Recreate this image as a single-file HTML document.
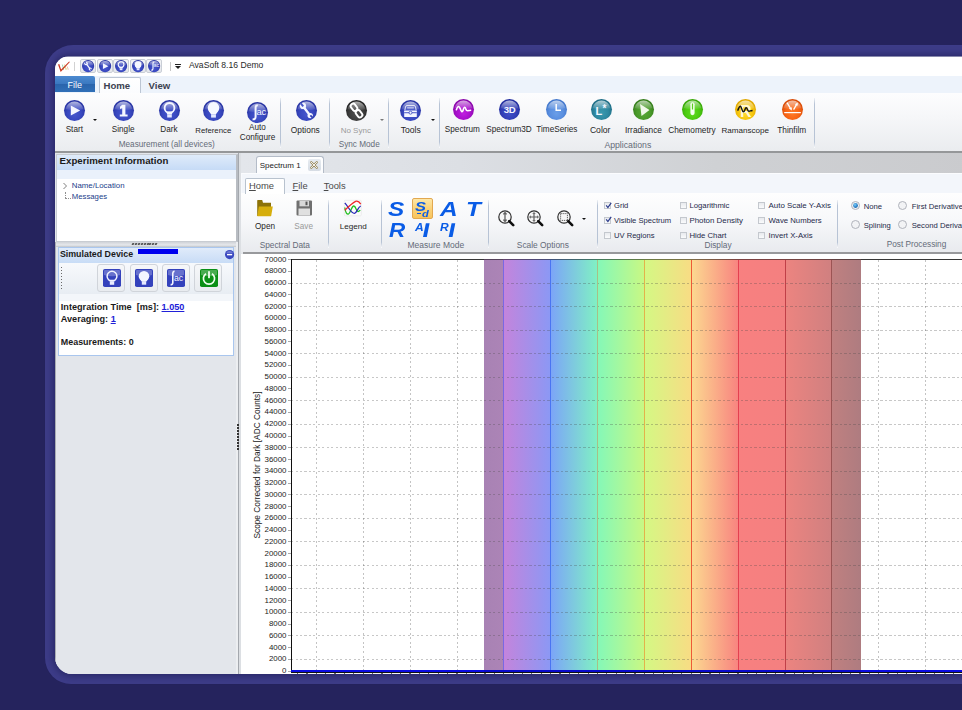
<!DOCTYPE html>
<html><head><meta charset="utf-8"><style>
*{margin:0;padding:0;box-sizing:border-box}
html,body{width:962px;height:710px;overflow:hidden;background:#25235d;font-family:"Liberation Sans",sans-serif}
.frame{position:absolute;left:45px;top:45px;width:960px;height:639px;border-radius:28px 28px 28px 26px;background:#3d3c88}
.shd{position:absolute;left:55px;top:56.6px;width:960px;height:617.4px;border-radius:13px 0 0 17px;box-shadow:0 0 7px 2px rgba(22,21,70,.55)}
.app{position:absolute;left:0;top:0;width:962px;height:710px;clip-path:inset(56.6px -40px 36px 55px round 13px 0 0 17px);background:#e2e5ea}
.a{position:absolute}
.t{position:absolute;white-space:nowrap;line-height:1}
.c{position:absolute;white-space:nowrap;line-height:1;width:100px;text-align:center}
svg{position:absolute;overflow:visible}
</style></head><body>
<div class="frame"></div><div class="shd"></div>
<div class="app">
<div class="a" style="left:55px;top:57px;width:920px;height:19px;background:#fff"></div>
<div class="a" style="left:55px;top:76px;width:920px;height:17px;background:#edf3fb"></div>
<div class="a" style="left:55px;top:93px;width:920px;height:58px;background:linear-gradient(#fdfdfe,#f6f7f9 40%,#eaecef)"></div>
<div class="a" style="left:55px;top:151px;width:920px;height:2px;background:#959799"></div>
<svg style="left:56px;top:59px" width="16" height="15" viewBox="0 0 16 15">
<path d="M6.4 5.6 L7.6 11 M7 8.6 L8.4 8.4" stroke="#9ad0a8" stroke-width="0.9" fill="none"/>
<path d="M8.6 5.4 L9.6 10.6 M9.2 8 L11 10.8" stroke="#e6d890" stroke-width="0.9" fill="none"/>
<path d="M11 7.4 L12.4 10.6" stroke="#f0b8a0" stroke-width="0.9" fill="none"/>
<path d="M2 5.4 L3.3 5.1 L5.1 10.6 L13.1 2.4 L13.9 3.1 L4.7 12.9 Z" fill="#cc3a22"/>
</svg>
<div class="a" style="left:73.5px;top:62px;width:1.5px;height:8.5px;background:#d2d2d2"></div>
<div class="a" style="left:170px;top:62px;width:1px;height:9px;background:#c6c6c6"></div>
<div class="a" style="left:175px;top:64px;width:6px;height:1px;background:#222"></div>
<div class="a" style="left:175px;top:66px;width:0px;height:0px;border-left:3px solid transparent;border-right:3px solid transparent;border-top:3px solid #222"></div>
<div class="t" style="left:189px;top:60.72px;font-size:8.6px;color:#2a2a2a;">AvaSoft 8.16 Demo</div>
<div class="a" style="left:55px;top:76px;width:40px;height:16px;border-radius:0 2px 0 0;background:linear-gradient(#4c8ad0,#3a78c0 50%,#2a64ac 51%,#3070b8)"></div>
<div class="t" style="left:67.5px;top:81.48px;font-size:9px;color:#fff;">File</div>
<div class="a" style="left:99px;top:77px;width:42px;height:16px;border:1px solid #bcc6d4;border-bottom:none;border-radius:2px 2px 0 0;background:linear-gradient(#fff,#fbfcfe)"></div>
<div class="t" style="left:103.5px;top:80.77px;font-size:9.6px;color:#3c4250;font-weight:bold">Home</div>
<div class="t" style="left:148.5px;top:80.77px;font-size:9.6px;color:#3c4250;font-weight:bold">View</div>
<svg width="0" height="0" style="position:absolute"><defs><radialGradient id="gBlue" cx="50%" cy="60%" r="55%" fx="50%" fy="70%"><stop offset="0" stop-color="#4656cc"/><stop offset="0.6" stop-color="#3848c0"/><stop offset="1" stop-color="#2a36a4"/></radialGradient><radialGradient id="gGray" cx="50%" cy="60%" r="55%" fx="50%" fy="70%"><stop offset="0" stop-color="#505050"/><stop offset="0.6" stop-color="#3e3e3e"/><stop offset="1" stop-color="#262626"/></radialGradient><radialGradient id="gPurp" cx="50%" cy="60%" r="55%" fx="50%" fy="70%"><stop offset="0" stop-color="#c020e0"/><stop offset="0.6" stop-color="#a810cc"/><stop offset="1" stop-color="#8a08aa"/></radialGradient><radialGradient id="gLBlue" cx="50%" cy="60%" r="55%" fx="50%" fy="70%"><stop offset="0" stop-color="#6a9ee8"/><stop offset="0.6" stop-color="#5a8fe0"/><stop offset="1" stop-color="#4378cc"/></radialGradient><radialGradient id="gTeal" cx="50%" cy="60%" r="55%" fx="50%" fy="70%"><stop offset="0" stop-color="#3a9ab0"/><stop offset="0.6" stop-color="#2e88a0"/><stop offset="1" stop-color="#1f6e86"/></radialGradient><radialGradient id="gGreen" cx="50%" cy="60%" r="55%" fx="50%" fy="70%"><stop offset="0" stop-color="#58a838"/><stop offset="0.6" stop-color="#4a9a2a"/><stop offset="1" stop-color="#367e1c"/></radialGradient><radialGradient id="gLime" cx="50%" cy="60%" r="55%" fx="50%" fy="70%"><stop offset="0" stop-color="#60dc20"/><stop offset="0.6" stop-color="#4ccc10"/><stop offset="1" stop-color="#38a808"/></radialGradient><radialGradient id="gYel" cx="50%" cy="60%" r="55%" fx="50%" fy="70%"><stop offset="0" stop-color="#ffd830"/><stop offset="0.6" stop-color="#f8c810"/><stop offset="1" stop-color="#e0a800"/></radialGradient><radialGradient id="gOra" cx="50%" cy="60%" r="55%" fx="50%" fy="70%"><stop offset="0" stop-color="#ff7a28"/><stop offset="0.6" stop-color="#f86414"/><stop offset="1" stop-color="#d84c08"/></radialGradient><radialGradient id="gDBlue" cx="50%" cy="60%" r="55%" fx="50%" fy="70%"><stop offset="0" stop-color="#4050c8"/><stop offset="0.6" stop-color="#3340b8"/><stop offset="1" stop-color="#2530a0"/></radialGradient><linearGradient id="hl" x1="0" y1="0" x2="0" y2="1"><stop offset="0" stop-color="#fff" stop-opacity=".65"/><stop offset="1" stop-color="#fff" stop-opacity=".05"/></linearGradient><linearGradient id="hl2" x1="0" y1="0" x2="0" y2="1"><stop offset="0" stop-color="#fff" stop-opacity=".45"/><stop offset="1" stop-color="#fff" stop-opacity="0"/></linearGradient></defs></svg>
<svg style="left:63.80px;top:99.90px" width="21" height="21" viewBox="0 0 21 21"><circle cx="10.5" cy="10.5" r="10.5" fill="url(#gBlue)"/><path d="M1.6 9.2 A9 9 0 0 1 19.4 9.2 Q10.5 11.5 1.6 9.2Z" fill="url(#hl)"/><polygon points="6.8,5.6 16.2,10.6 6.8,15.4" fill="#f4f6ff"/></svg>
<svg style="left:113.20px;top:100.00px" width="21" height="21" viewBox="0 0 21 21"><circle cx="10.5" cy="10.5" r="10.5" fill="url(#gBlue)"/><path d="M1.6 9.2 A9 9 0 0 1 19.4 9.2 Q10.5 11.5 1.6 9.2Z" fill="url(#hl)"/><path d="M9.2 4.8 L12.4 4.8 L12.4 14.4 L14.6 14.4 L14.6 16.6 L6.8 16.6 L6.8 14.4 L9.2 14.4 L9.2 8.2 L7 9 L7 6.8 Z" fill="#f4f6ff"/></svg>
<svg style="left:159.30px;top:100.00px" width="21" height="21" viewBox="0 0 21 21"><circle cx="10.5" cy="10.5" r="10.5" fill="url(#gBlue)"/><path d="M1.6 9.2 A9 9 0 0 1 19.4 9.2 Q10.5 11.5 1.6 9.2Z" fill="url(#hl)"/><circle cx="10.5" cy="7.9" r="4.9" fill="none" stroke="#f4f6ff" stroke-width="1.9"/><path d="M7.2 11.6 L13.8 11.6 L12.8 14.5 L8.2 14.5Z" fill="#f4f6ff"/><rect x="8.2" y="14.4" width="4.6" height="3.1" fill="#e6eaff"/></svg>
<svg style="left:203.20px;top:99.90px" width="21" height="21" viewBox="0 0 21 21"><circle cx="10.5" cy="10.5" r="10.5" fill="url(#gBlue)"/><path d="M1.6 9.2 A9 9 0 0 1 19.4 9.2 Q10.5 11.5 1.6 9.2Z" fill="url(#hl)"/><circle cx="10.5" cy="7.8" r="5.8" fill="#f6f8ff"/><path d="M5.6 10.2 L15.4 10.2 L12.9 14.5 L8.1 14.5Z" fill="#f6f8ff"/><rect x="8.1" y="14.4" width="4.8" height="3.2" fill="#e6eaff"/></svg>
<svg style="left:247.30px;top:101.90px" width="21" height="21" viewBox="0 0 21 21"><circle cx="10.5" cy="10.5" r="10.5" fill="url(#gBlue)"/><path d="M1.6 9.2 A9 9 0 0 1 19.4 9.2 Q10.5 11.5 1.6 9.2Z" fill="url(#hl)"/><path d="M10.8 3.6 C9.2 3.2 8.6 4.2 8.6 6 L8.6 14.4 C8.6 16.6 7.8 17.6 5.6 17.3" fill="none" stroke="#f4f6ff" stroke-width="2"/><text x="9.6" y="12.8" font-family="Liberation Sans" font-size="9.4" letter-spacing="-0.3" fill="#f4f6ff">ac</text></svg>
<svg style="left:296.00px;top:100.00px" width="21" height="21" viewBox="0 0 21 21"><circle cx="10.5" cy="10.5" r="10.5" fill="url(#gBlue)"/><path d="M1.6 9.2 A9 9 0 0 1 19.4 9.2 Q10.5 11.5 1.6 9.2Z" fill="url(#hl)"/><path d="M7.8 7.2 L13.6 14.8" stroke="#f4f6ff" stroke-width="2.3" stroke-linecap="round"/><circle cx="7" cy="5.9" r="3.1" fill="#f4f6ff"/><circle cx="14.2" cy="15.6" r="2.7" fill="#f4f6ff"/><path d="M4.6 3.2 L7.2 6.4" stroke="#4858c8" stroke-width="2"/><path d="M16.8 17.8 L14.4 15.4" stroke="#3040b4" stroke-width="1.8"/></svg>
<svg style="left:346.10px;top:100.00px" width="21" height="21" viewBox="0 0 21 21"><circle cx="10.5" cy="10.5" r="10.5" fill="url(#gGray)"/><path d="M1.6 9.2 A9 9 0 0 1 19.4 9.2 Q10.5 11.5 1.6 9.2Z" fill="url(#hl)"/><g transform="rotate(-38 10.5 10.5)"><rect x="8.1" y="2.6" width="4.8" height="7.6" rx="2.1" fill="none" stroke="#fff" stroke-width="1.9"/><rect x="8.1" y="10.8" width="4.8" height="7.6" rx="2.1" fill="none" stroke="#fff" stroke-width="1.9"/></g></svg>
<svg style="left:400.10px;top:100.00px" width="21" height="21" viewBox="0 0 21 21"><circle cx="10.5" cy="10.5" r="10.5" fill="url(#gBlue)"/><path d="M1.6 9.2 A9 9 0 0 1 19.4 9.2 Q10.5 11.5 1.6 9.2Z" fill="url(#hl)"/><path d="M4.8 10.4 L5.5 6.8 Q5.8 5.6 7 5.6 L14 5.6 Q15.2 5.6 15.5 6.8 L16.2 10.4" fill="none" stroke="#fff" stroke-opacity=".85" stroke-width="1"/><rect x="7.2" y="7.4" width="6.6" height="1" fill="#fff" opacity=".8"/><rect x="4.2" y="10.6" width="12.6" height="6.4" rx="0.6" fill="#f4f6ff"/><rect x="4.2" y="12.3" width="12.6" height="0.9" fill="#3848c0"/><circle cx="10.5" cy="12.7" r="1.5" fill="#f4f6ff" stroke="#3848c0" stroke-width="0.8"/></svg>
<svg style="left:452.50px;top:99.00px" width="21" height="21" viewBox="0 0 21 21"><circle cx="10.5" cy="10.5" r="10.5" fill="url(#gPurp)"/><path d="M1.6 9.2 A9 9 0 0 1 19.4 9.2 Q10.5 11.5 1.6 9.2Z" fill="url(#hl)"/><path d="M3.4 10.8 C4.6 6.8 6 6.4 7.2 9.6 C8.2 12.6 9.2 14.6 10.4 10.2 C11.2 7.4 12.2 7.6 13 10.6 C13.6 12.6 14.8 11.6 17.6 11.2" fill="none" stroke="#fff" stroke-width="1.6" stroke-linecap="round"/></svg>
<svg style="left:498.90px;top:99.00px" width="21" height="21" viewBox="0 0 21 21"><circle cx="10.5" cy="10.5" r="10.5" fill="url(#gDBlue)"/><path d="M1.6 9.2 A9 9 0 0 1 19.4 9.2 Q10.5 11.5 1.6 9.2Z" fill="url(#hl)"/><text x="10.6" y="14.4" font-family="Liberation Sans" font-weight="bold" font-size="9.6" letter-spacing="-0.3" fill="#f4f6ff" text-anchor="middle">3D</text></svg>
<svg style="left:546.40px;top:99.00px" width="21" height="21" viewBox="0 0 21 21"><circle cx="10.5" cy="10.5" r="10.5" fill="url(#gLBlue)"/><path d="M1.6 9.2 A9 9 0 0 1 19.4 9.2 Q10.5 11.5 1.6 9.2Z" fill="url(#hl)"/><path d="M10.2 5 L10.2 11.2 L15 11.2" fill="none" stroke="#fff" stroke-width="1.5"/></svg>
<svg style="left:590.75px;top:99.00px" width="21" height="21" viewBox="0 0 21 21"><circle cx="10.5" cy="10.5" r="10.5" fill="url(#gTeal)"/><path d="M1.6 9.2 A9 9 0 0 1 19.4 9.2 Q10.5 11.5 1.6 9.2Z" fill="url(#hl)"/><text x="4.6" y="15.6" font-family="Liberation Sans" font-weight="bold" font-size="11" fill="#f4f6ff">L</text><text x="11.4" y="13" font-family="Liberation Sans" font-weight="bold" font-size="10" fill="#f4f6ff">*</text></svg>
<svg style="left:633.25px;top:99.00px" width="21" height="21" viewBox="0 0 21 21"><circle cx="10.5" cy="10.5" r="10.5" fill="url(#gGreen)"/><path d="M1.6 9.2 A9 9 0 0 1 19.4 9.2 Q10.5 11.5 1.6 9.2Z" fill="url(#hl)"/><polygon points="7,5 16.5,11 8.5,17" fill="#f0f8ea"/></svg>
<svg style="left:681.50px;top:99.00px" width="21" height="21" viewBox="0 0 21 21"><circle cx="10.5" cy="10.5" r="10.5" fill="url(#gLime)"/><path d="M1.6 9.2 A9 9 0 0 1 19.4 9.2 Q10.5 11.5 1.6 9.2Z" fill="url(#hl)"/><rect x="8.4" y="3.2" width="4.2" height="13" rx="2.1" fill="#f4fff0"/><rect x="9.9" y="4.5" width="1.2" height="6" fill="#5ccc20"/></svg>
<svg style="left:734.50px;top:99.00px" width="21" height="21" viewBox="0 0 21 21"><circle cx="10.5" cy="10.5" r="10.5" fill="url(#gYel)"/><path d="M1.6 9.2 A9 9 0 0 1 19.4 9.2 Q10.5 11.5 1.6 9.2Z" fill="url(#hl)"/><text x="10.8" y="17.6" font-family="Liberation Sans" font-weight="bold" font-size="16" fill="#fff8d8" text-anchor="middle">R</text><path d="M2.6 11.6 C3.6 10 4.2 6.8 5.4 7.2 C6.6 7.6 7 12.8 8.4 12.8 C9.8 12.8 10 8.6 11.2 8.8 C12.4 9 12.6 12.4 14 12.2 C15.2 12 15.8 11.6 17.6 11.4" fill="none" stroke="#151515" stroke-width="1.5"/></svg>
<svg style="left:782.00px;top:99.00px" width="21" height="21" viewBox="0 0 21 21"><circle cx="10.5" cy="10.5" r="10.5" fill="url(#gOra)"/><path d="M1.6 9.2 A9 9 0 0 1 19.4 9.2 Q10.5 11.5 1.6 9.2Z" fill="url(#hl)"/><rect x="2.2" y="13" width="16.6" height="1.2" fill="#fff"/><path d="M5 3.6 L8.8 9.8" stroke="#fff" stroke-width="1.3"/><polygon points="9.8,11.4 6.8,9.4 9.8,8.2" fill="#fff"/><path d="M11.6 10.6 L14.8 5.2" stroke="#fff" stroke-width="1.3"/><polygon points="15.8,3.4 12.8,5.2 15.6,6.8" fill="#fff"/></svg>
<div class="c" style="left:24.30px;top:126.46px;font-size:8.2px;color:#262626;">Start</div>
<div class="c" style="left:73.15px;top:126.46px;font-size:8.2px;color:#262626;">Single</div>
<div class="c" style="left:119.00px;top:126.46px;font-size:8.2px;color:#262626;">Dark</div>
<div class="c" style="left:163.30px;top:126.80px;font-size:7.8px;color:#262626;">Reference</div>
<div class="c" style="left:207.50px;top:124.26px;font-size:8.2px;color:#262626;">Auto</div>
<div class="c" style="left:207.50px;top:133.86px;font-size:8.2px;color:#262626;">Configure</div>
<div class="c" style="left:255.30px;top:126.29px;font-size:8.4px;color:#262626;">Options</div>
<div class="c" style="left:305.80px;top:126.63px;font-size:8px;color:#9a9a9a;">No Sync</div>
<div class="c" style="left:360.80px;top:126.12px;font-size:8.6px;color:#262626;">Tools</div>
<div class="c" style="left:412.40px;top:126.46px;font-size:8.2px;color:#262626;">Spectrum</div>
<div class="c" style="left:459.00px;top:126.46px;font-size:8.2px;color:#262626;">Spectrum3D</div>
<div class="c" style="left:506.90px;top:126.46px;font-size:8.2px;color:#262626;">TimeSeries</div>
<div class="c" style="left:550.20px;top:126.12px;font-size:8.6px;color:#262626;">Color</div>
<div class="c" style="left:593.50px;top:126.37px;font-size:8.3px;color:#262626;">Irradiance</div>
<div class="c" style="left:641.90px;top:126.37px;font-size:8.3px;color:#262626;">Chemometry</div>
<div class="c" style="left:695.25px;top:126.54px;font-size:8.1px;color:#262626;">Ramanscope</div>
<div class="c" style="left:741.75px;top:126.37px;font-size:8.3px;color:#262626;">Thinfilm</div>
<div class="t" style="left:118.75px;top:141.36px;font-size:8.2px;color:#646b78;">Measurement (all devices)</div>
<div class="t" style="left:338.75px;top:141.36px;font-size:8.2px;color:#646b78;">Sync Mode</div>
<div class="t" style="left:604.4px;top:140.94px;font-size:8.7px;color:#646b78;">Applications</div>
<div class="a" style="left:280px;top:98px;width:1px;height:50px;background:linear-gradient(rgba(185,197,215,0.2),#b7c3d5 12%,#b7c3d5 88%,rgba(255,255,255,.9))"></div>
<div class="a" style="left:329px;top:98px;width:1px;height:50px;background:linear-gradient(rgba(185,197,215,0.2),#b7c3d5 12%,#b7c3d5 88%,rgba(255,255,255,.9))"></div>
<div class="a" style="left:388px;top:98px;width:1px;height:50px;background:linear-gradient(rgba(185,197,215,0.2),#b7c3d5 12%,#b7c3d5 88%,rgba(255,255,255,.9))"></div>
<div class="a" style="left:439px;top:98px;width:1px;height:50px;background:linear-gradient(rgba(185,197,215,0.2),#b7c3d5 12%,#b7c3d5 88%,rgba(255,255,255,.9))"></div>
<div class="a" style="left:814px;top:98px;width:1px;height:50px;background:linear-gradient(rgba(185,197,215,0.2),#b7c3d5 12%,#b7c3d5 88%,rgba(255,255,255,.9))"></div>
<div class="a" style="left:93.3px;top:119.0px;width:0px;height:0px;border-left:2.5px solid transparent;border-right:2.5px solid transparent;border-top:2.5px solid #111"></div>
<div class="a" style="left:379.5px;top:119.0px;width:0px;height:0px;border-left:2.5px solid transparent;border-right:2.5px solid transparent;border-top:2.5px solid #777"></div>
<div class="a" style="left:431.3px;top:119.0px;width:0px;height:0px;border-left:2.5px solid transparent;border-right:2.5px solid transparent;border-top:2.5px solid #111"></div>
<div class="a" style="left:80.0px;top:59px;width:16px;height:14px;border:1px solid #c9ced6;border-radius:2px;background:linear-gradient(#f4f5f7,#e4e7ec)"></div>
<div class="a" style="left:96.5px;top:59px;width:16px;height:14px;border:1px solid #c9ced6;border-radius:2px;background:linear-gradient(#f4f5f7,#e4e7ec)"></div>
<div class="a" style="left:113.0px;top:59px;width:16px;height:14px;border:1px solid #c9ced6;border-radius:2px;background:linear-gradient(#f4f5f7,#e4e7ec)"></div>
<div class="a" style="left:129.5px;top:59px;width:16px;height:14px;border:1px solid #c9ced6;border-radius:2px;background:linear-gradient(#f4f5f7,#e4e7ec)"></div>
<div class="a" style="left:146.0px;top:59px;width:16px;height:14px;border:1px solid #c9ced6;border-radius:2px;background:linear-gradient(#f4f5f7,#e4e7ec)"></div>
<svg style="left:82.40px;top:59.70px" width="12.2" height="12.2" viewBox="0 0 21 21"><circle cx="10.5" cy="10.5" r="10.5" fill="url(#gBlue)"/><path d="M1.6 9.2 A9 9 0 0 1 19.4 9.2 Q10.5 11.5 1.6 9.2Z" fill="url(#hl)"/><path d="M7.8 7.2 L13.6 14.8" stroke="#f4f6ff" stroke-width="2.3" stroke-linecap="round"/><circle cx="7" cy="5.9" r="3.1" fill="#f4f6ff"/><circle cx="14.2" cy="15.6" r="2.7" fill="#f4f6ff"/><path d="M4.6 3.2 L7.2 6.4" stroke="#4858c8" stroke-width="2"/><path d="M16.8 17.8 L14.4 15.4" stroke="#3040b4" stroke-width="1.8"/></svg>
<svg style="left:98.80px;top:59.70px" width="12.2" height="12.2" viewBox="0 0 21 21"><circle cx="10.5" cy="10.5" r="10.5" fill="url(#gBlue)"/><path d="M1.6 9.2 A9 9 0 0 1 19.4 9.2 Q10.5 11.5 1.6 9.2Z" fill="url(#hl)"/><polygon points="6.8,5.6 16.2,10.6 6.8,15.4" fill="#f4f6ff"/></svg>
<svg style="left:115.20px;top:59.70px" width="12.2" height="12.2" viewBox="0 0 21 21"><circle cx="10.5" cy="10.5" r="10.5" fill="url(#gBlue)"/><path d="M1.6 9.2 A9 9 0 0 1 19.4 9.2 Q10.5 11.5 1.6 9.2Z" fill="url(#hl)"/><circle cx="10.5" cy="7.9" r="4.9" fill="none" stroke="#f4f6ff" stroke-width="1.9"/><path d="M7.2 11.6 L13.8 11.6 L12.8 14.5 L8.2 14.5Z" fill="#f4f6ff"/><rect x="8.2" y="14.4" width="4.6" height="3.1" fill="#e6eaff"/></svg>
<svg style="left:131.60px;top:59.70px" width="12.2" height="12.2" viewBox="0 0 21 21"><circle cx="10.5" cy="10.5" r="10.5" fill="url(#gBlue)"/><path d="M1.6 9.2 A9 9 0 0 1 19.4 9.2 Q10.5 11.5 1.6 9.2Z" fill="url(#hl)"/><circle cx="10.5" cy="7.8" r="5.8" fill="#f6f8ff"/><path d="M5.6 10.2 L15.4 10.2 L12.9 14.5 L8.1 14.5Z" fill="#f6f8ff"/><rect x="8.1" y="14.4" width="4.8" height="3.2" fill="#e6eaff"/></svg>
<svg style="left:148.00px;top:59.70px" width="12.2" height="12.2" viewBox="0 0 21 21"><circle cx="10.5" cy="10.5" r="10.5" fill="url(#gBlue)"/><path d="M1.6 9.2 A9 9 0 0 1 19.4 9.2 Q10.5 11.5 1.6 9.2Z" fill="url(#hl)"/><path d="M10.8 3.6 C9.2 3.2 8.6 4.2 8.6 6 L8.6 14.4 C8.6 16.6 7.8 17.6 5.6 17.3" fill="none" stroke="#f4f6ff" stroke-width="2"/><text x="9.6" y="12.8" font-family="Liberation Sans" font-size="9.4" letter-spacing="-0.3" fill="#f4f6ff">ac</text></svg>
<div class="a" style="left:55px;top:153px;width:184px;height:521px;background:#e3e6eb"></div>
<div class="a" style="left:55.5px;top:153.5px;width:182.5px;height:88.5px;background:#fff;border:1px solid #c8ccd2;border-right:2px solid #b8bcc2"></div>
<div class="a" style="left:56.5px;top:154.5px;width:179.5px;height:15.8px;background:linear-gradient(#dfebfa,#c6dbf6)"></div>
<div class="a" style="left:56.5px;top:170.3px;width:179.5px;height:8.7px;background:#eaf1fb"></div>
<div class="t" style="left:59.6px;top:155.89px;font-size:9.7px;color:#1a1a1a;font-weight:bold">Experiment Information</div>
<svg style="left:62px;top:181.5px" width="6" height="8" viewBox="0 0 6 8"><path d="M1.5 1 L4.5 4 L1.5 7" fill="none" stroke="#808080" stroke-width="1"/></svg>
<div class="a" style="left:65px;top:192px;width:0px;height:6px;border-left:1px dotted #909090"></div>
<div class="a" style="left:65px;top:198px;width:6px;height:0px;border-top:1px dotted #909090"></div>
<div class="t" style="left:71.8px;top:181.75px;font-size:7.85px;color:#22408a;">Name/Location</div>
<div class="t" style="left:71.8px;top:193.34px;font-size:7.75px;color:#22408a;">Messages</div>
<div class="a" style="left:55px;top:242px;width:183px;height:5px;background:linear-gradient(#d0d3d8,#e6e8ec 60%,#bfc3c9)"></div>
<div class="a" style="left:132.0px;top:243px;width:1.6px;height:2px;background:#555;transform:skewX(-25deg)"></div>
<div class="a" style="left:134.9px;top:243px;width:1.6px;height:2px;background:#555;transform:skewX(-25deg)"></div>
<div class="a" style="left:137.8px;top:243px;width:1.6px;height:2px;background:#555;transform:skewX(-25deg)"></div>
<div class="a" style="left:140.7px;top:243px;width:1.6px;height:2px;background:#555;transform:skewX(-25deg)"></div>
<div class="a" style="left:143.6px;top:243px;width:1.6px;height:2px;background:#555;transform:skewX(-25deg)"></div>
<div class="a" style="left:146.5px;top:243px;width:1.6px;height:2px;background:#555;transform:skewX(-25deg)"></div>
<div class="a" style="left:149.4px;top:243px;width:1.6px;height:2px;background:#555;transform:skewX(-25deg)"></div>
<div class="a" style="left:152.3px;top:243px;width:1.6px;height:2px;background:#555;transform:skewX(-25deg)"></div>
<div class="a" style="left:155.2px;top:243px;width:1.6px;height:2px;background:#555;transform:skewX(-25deg)"></div>
<div class="a" style="left:57.5px;top:246.5px;width:176.5px;height:109px;background:#fff;border:1px solid #a9c6ee"></div>
<div class="a" style="left:58.5px;top:247.5px;width:174.5px;height:15px;background:linear-gradient(#e0ebfa,#c8dcf6)"></div>
<div class="t" style="left:59.9px;top:250.31px;font-size:8.85px;color:#1a1a1a;font-weight:bold">Simulated Device</div>
<div class="a" style="left:137.7px;top:249.2px;width:40.4px;height:4.5px;background:#0000ee"></div>
<svg style="left:225px;top:249.8px" width="9.2" height="9.2" viewBox="0 0 10 10"><circle cx="5" cy="5" r="5" fill="#3a48c0"/><path d="M1.2 3.6 A4 4 0 0 1 8.8 3.6Z" fill="#fff" opacity=".25"/><rect x="2.2" y="4.3" width="5.6" height="1.5" fill="#fff"/></svg>
<div class="a" style="left:58.5px;top:262.5px;width:174.5px;height:31px;background:linear-gradient(#f7f9fc,#e8edf3)"></div>
<div class="a" style="left:61px;top:266.5px;width:1.2px;height:1.5px;background:#6a6a6a"></div>
<div class="a" style="left:61px;top:269.5px;width:1.2px;height:1.5px;background:#6a6a6a"></div>
<div class="a" style="left:61px;top:272.5px;width:1.2px;height:1.5px;background:#6a6a6a"></div>
<div class="a" style="left:61px;top:275.5px;width:1.2px;height:1.5px;background:#6a6a6a"></div>
<div class="a" style="left:61px;top:278.5px;width:1.2px;height:1.5px;background:#6a6a6a"></div>
<div class="a" style="left:61px;top:281.5px;width:1.2px;height:1.5px;background:#6a6a6a"></div>
<div class="a" style="left:61px;top:284.5px;width:1.2px;height:1.5px;background:#6a6a6a"></div>
<div class="a" style="left:61px;top:287.5px;width:1.2px;height:1.5px;background:#6a6a6a"></div>
<div class="a" style="left:97.3px;top:264px;width:28px;height:28.2px;border:1px solid #d0d4da;border-radius:3px;background:linear-gradient(#f6f7f9,#e9ecf0)"></div>
<div class="a" style="left:129.5px;top:264px;width:28px;height:28.2px;border:1px solid #d0d4da;border-radius:3px;background:linear-gradient(#f6f7f9,#e9ecf0)"></div>
<div class="a" style="left:161.7px;top:264px;width:28px;height:28.2px;border:1px solid #d0d4da;border-radius:3px;background:linear-gradient(#f6f7f9,#e9ecf0)"></div>
<div class="a" style="left:193.9px;top:264px;width:28px;height:28.2px;border:1px solid #d0d4da;border-radius:3px;background:linear-gradient(#f6f7f9,#e9ecf0)"></div>
<svg style="left:103px;top:269px" width="18" height="18" viewBox="0 0 18 18"><rect x="0" y="0" width="18" height="18" rx="1.8" fill="#3442bc"/><path d="M1 6 Q9 8.5 17 6 L17 2 Q17 1 16 1 L2 1 Q1 1 1 2Z" fill="#fff" opacity=".25"/><circle cx="9" cy="7.2" r="4.9" fill="none" stroke="#f0f2ff" stroke-width="1.5"/><path d="M6.3 10.8 L11.7 10.8 L11 12.6 L7 12.6Z" fill="#f0f2ff"/><rect x="6.8" y="12.6" width="4.4" height="3.2" fill="#e8ecff"/></svg>
<svg style="left:135.2px;top:269px" width="18" height="18" viewBox="0 0 18 18"><rect x="0" y="0" width="18" height="18" rx="1.8" fill="#3442bc"/><path d="M1 6 Q9 8.5 17 6 L17 2 Q17 1 16 1 L2 1 Q1 1 1 2Z" fill="#fff" opacity=".25"/><circle cx="9" cy="7.2" r="5.3" fill="#f4f6ff"/><path d="M5.6 10.2 L12.4 10.2 L11.2 12.8 L6.8 12.8Z" fill="#f4f6ff"/><rect x="6.8" y="12.7" width="4.4" height="3" fill="#e6eaff"/></svg>
<svg style="left:167.4px;top:269px" width="18" height="18" viewBox="0 0 18 18"><rect x="0" y="0" width="18" height="18" rx="1.8" fill="#3442bc"/><path d="M1 6 Q9 8.5 17 6 L17 2 Q17 1 16 1 L2 1 Q1 1 1 2Z" fill="#fff" opacity=".25"/><path d="M7.6 2.4 C6.2 2.3 5.8 3.2 5.8 4.6 L5.8 13.4 C5.8 15 5.2 15.8 3.6 15.6" fill="none" stroke="#f4f6ff" stroke-width="1.6"/><text x="7" y="12" font-family="Liberation Sans" font-size="8.8" letter-spacing="-0.2" fill="#f4f6ff">ac</text></svg>
<svg style="left:199.6px;top:269px" width="18" height="18" viewBox="0 0 18 18"><rect x="0" y="0" width="18" height="18" rx="1.8" fill="#0a9016"/><path d="M1 6 Q9 8.5 17 6 L17 2 Q17 1 16 1 L2 1 Q1 1 1 2Z" fill="#fff" opacity=".25"/><path d="M6 4.8 A5.6 5.6 0 1 0 12 4.8" fill="none" stroke="#f0fff0" stroke-width="1.7"/><rect x="8.1" y="2.2" width="1.8" height="7" fill="#f0fff0"/></svg>
<div class="a" style="left:58.5px;top:293.5px;width:174.5px;height:7px;background:#f3f6fa"></div>
<div class="t" style="left:60.8px;top:303.45px;font-size:9.15px;color:#1a1a1a;font-weight:bold">Integration Time&nbsp; [ms]: <span style="color:#2020d8;text-decoration:underline">1.050</span></div>
<div class="t" style="left:60.8px;top:315.05px;font-size:9.15px;color:#1a1a1a;font-weight:bold">Averaging: <span style="color:#2020d8;text-decoration:underline">1</span></div>
<div class="t" style="left:60.8px;top:337.94px;font-size:8.93px;color:#1a1a1a;font-weight:bold">Measurements: 0</div>
<div class="a" style="left:236px;top:242px;width:2px;height:432px;background:#eceef1"></div>
<div class="a" style="left:238px;top:153px;width:1px;height:521px;background:#a4a8ae"></div>
<div class="a" style="left:239px;top:153px;width:2px;height:521px;background:#dcdfe3"></div>
<div class="a" style="left:55px;top:242px;width:1px;height:432px;background:#a9adb3"></div>
<div class="a" style="left:241px;top:153px;width:730px;height:521px;background:linear-gradient(90deg,#e3e6eb,#dcdfe4 30%,#cfd1d4 65%,#cacbce)"></div>
<div class="a" style="left:255.5px;top:156.3px;width:68px;height:17px;background:linear-gradient(#fff,#fbfcfe);border:1px solid #b4bcc8;border-bottom:none;border-radius:3px 3px 0 0"></div>
<div class="t" style="left:259.75px;top:161.53px;font-size:8px;color:#222;">Spectrum 1</div>
<div class="a" style="left:307.5px;top:158.8px;width:13px;height:12.5px;background:linear-gradient(#e8ecf1,#d6dce4);border-radius:2px"></div>
<svg style="left:310.2px;top:161.2px" width="8" height="8" viewBox="0 0 8 8"><path d="M1.2 1.2 L6.8 6.8 M6.8 1.2 L1.2 6.8" stroke="#9a8a60" stroke-width="2.2" stroke-linecap="round"/><path d="M1.2 1.2 L6.8 6.8 M6.8 1.2 L1.2 6.8" stroke="#f2f0e8" stroke-width="1" stroke-linecap="round"/></svg>
<div class="a" style="left:240.9px;top:172.9px;width:730px;height:20.5px;background:#f3f6fb;border-top:1px solid #fbfcfe;border-left:1px solid #f8fafd"></div>
<div class="a" style="left:240.9px;top:193px;width:730px;height:60px;background:linear-gradient(#fefefe,#f7f8fa 45%,#e8eaee)"></div>
<div class="a" style="left:243px;top:252px;width:730px;height:1.5px;background:#98999c"></div>
<div class="a" style="left:243px;top:253.5px;width:730px;height:0.8px;background:#c8cacd"></div>
<div class="a" style="left:244.8px;top:177.5px;width:40px;height:16px;border:1px solid #b8c2ce;border-bottom:none;border-radius:2px 2px 0 0;background:#fff"></div>
<div class="t" style="left:249px;top:180.84px;font-size:9.4px;color:#4a4a4a;"><u>H</u>ome</div>
<div class="t" style="left:292.5px;top:180.84px;font-size:9.4px;color:#4a4a4a;"><u>F</u>ile</div>
<div class="t" style="left:323.75px;top:180.84px;font-size:9.4px;color:#4a4a4a;"><u>T</u>ools</div>
<svg style="left:257.3px;top:200px" width="16" height="16.2" viewBox="0 0 16 16.2"><path d="M0.2 0.6 Q0.2 0 0.8 0 L5.2 0 L6 2.8 L14 2.8 L14 16 L0.2 16Z" fill="#8c7208"/><path d="M1.8 6.6 L15.8 6.6 L14.2 16 Q14.1 16.2 13.8 16.2 L0.6 16.2 Q0.2 16.2 0.3 15.8Z" fill="#d6ae0c"/></svg>
<svg style="left:295.8px;top:200.3px" width="16.5" height="16" viewBox="0 0 16.5 16"><rect x="0.5" y="0.5" width="15.5" height="15" rx="1" fill="#707070"/><rect x="3.5" y="0.8" width="9.5" height="5.5" fill="#d8d8d8"/><rect x="9.5" y="1.6" width="2" height="3.6" fill="#555"/><rect x="2.5" y="8.5" width="11.5" height="6.8" fill="#e0e0e0"/></svg>
<div class="c" style="left:215.00px;top:222.76px;font-size:8.2px;color:#262626;">Open</div>
<div class="c" style="left:253.70px;top:222.76px;font-size:8.2px;color:#9a9a9a;">Save</div>
<div class="a" style="left:328px;top:200px;width:1px;height:48px;background:linear-gradient(rgba(185,197,215,0.2),#b7c3d5 12%,#b7c3d5 88%,rgba(255,255,255,.9))"></div>
<svg style="left:344.4px;top:200.2px" width="17.6" height="16.1" viewBox="0 0 17.6 16.1"><rect x="0.3" y="0.3" width="17" height="15.5" rx="0.8" fill="#fbfbfb" stroke="#e4e4e4" stroke-width="0.6"/><path d="M0.8 7.5 C1.6 13 3 14.6 4.6 14 C6.6 13 7.6 6 9.8 6 C12 6 12.2 12 14 11.6 C15 11.3 15.8 10.6 16.2 10" fill="none" stroke="#22c022" stroke-width="1.3"/><path d="M0.8 3 C4 6 7 13.6 10.5 13.4 C13 13.2 13.6 7 16.8 6" fill="none" stroke="#2828b8" stroke-width="1.3"/><path d="M0.8 10.2 C4 7 8 3 11.6 1.3 C13.6 0.6 15.6 2.2 16.8 4.2" fill="none" stroke="#f02828" stroke-width="1.3"/></svg>
<div class="c" style="left:303.25px;top:222.84px;font-size:8.1px;color:#262626;">Legend</div>
<div class="t" style="left:259.7px;top:241.27px;font-size:8.3px;color:#646b78;">Spectral Data</div>
<div class="a" style="left:381px;top:200px;width:1px;height:48px;background:linear-gradient(rgba(185,197,215,0.2),#b7c3d5 12%,#b7c3d5 88%,rgba(255,255,255,.9))"></div>
<div class="a" style="left:411.5px;top:198px;width:21px;height:20.8px;border:1px solid #e2a850;border-radius:2px;background:linear-gradient(#fde7a8,#fbd37a 50%,#f8c45c)"></div>
<div class="t" style="left:388px;top:200.29px;font-size:19.5px;color:#0a5ce6;font-weight:bold;font-style:italic;transform-origin:0 0;transform:scaleX(1.25)">S</div>
<div class="t" style="left:439.6px;top:200.29px;font-size:19.5px;color:#0a5ce6;font-weight:bold;font-style:italic;transform-origin:0 0;transform:scaleX(1.25)">A</div>
<div class="t" style="left:465.5px;top:200.29px;font-size:19.5px;color:#0a5ce6;font-weight:bold;font-style:italic;transform-origin:0 0;transform:scaleX(1.25)">T</div>
<div class="t" style="left:389px;top:221.49px;font-size:19.5px;color:#0a5ce6;font-weight:bold;font-style:italic;transform-origin:0 0;transform:scaleX(1.15)">R</div>
<div class="t" style="left:415.0px;top:199.77px;font-size:13.5px;color:#0a5ce6;font-weight:bold;font-style:italic;transform-origin:0 0;transform:scaleX(1.22)">S</div>
<div class="t" style="left:421.6px;top:208.67px;font-size:9.6px;color:#0a5ce6;font-weight:bold;font-style:italic;transform-origin:0 0;transform:scaleX(1.15)">d</div>
<div class="a" style="left:417px;top:213.1px;width:3.6px;height:1.3px;background:#0a5ce6"></div>
<div class="t" style="left:414.6px;top:223.44px;font-size:10px;color:#0a5ce6;font-weight:bold;font-style:italic;transform-origin:0 0;transform:scaleX(1.2)">A</div>
<div class="t" style="left:440.4px;top:223.44px;font-size:10px;color:#0a5ce6;font-weight:bold;font-style:italic;transform-origin:0 0;transform:scaleX(1.2)">R</div>
<svg style="left:0;top:0" width="1" height="1"><polygon points="425.9,223.2 429.6,223.2 426.8,236.9 423.0,236.9" fill="#0a5ce6"/><polygon points="451.6,223.2 455.3,223.2 452.5,236.9 448.7,236.9" fill="#0a5ce6"/></svg>
<div class="t" style="left:407.5px;top:241.10px;font-size:8.5px;color:#646b78;">Measure Mode</div>
<div class="a" style="left:488px;top:200px;width:1px;height:48px;background:linear-gradient(rgba(185,197,215,0.2),#b7c3d5 12%,#b7c3d5 88%,rgba(255,255,255,.9))"></div>
<svg style="left:498px;top:209.5px" width="17" height="17" viewBox="0 0 17 17"><circle cx="7" cy="7" r="6.2" fill="#f6f6f6" stroke="#303030" stroke-width="1.2"/><path d="M7 2.8 L7 11.2 M5.4 4.4 L7 2.6 L8.6 4.4 M5.4 9.6 L7 11.4 L8.6 9.6" fill="none" stroke="#606060" stroke-width="1.3"/><path d="M11.2 11.2 L15.2 15.2" stroke="#101010" stroke-width="2.6" stroke-linecap="round"/></svg>
<svg style="left:526.5px;top:209.5px" width="17" height="17" viewBox="0 0 17 17"><circle cx="7" cy="7" r="6.2" fill="#f6f6f6" stroke="#303030" stroke-width="1.2"/><path d="M7 2.8 L7 11.2 M2.8 7 L11.2 7" stroke="#606060" stroke-width="1.2"/><path d="M5.8 4 L7 2.6 L8.2 4 M5.8 10 L7 11.4 L8.2 10 M4 5.8 L2.6 7 L4 8.2 M10 5.8 L11.4 7 L10 8.2" fill="none" stroke="#606060" stroke-width="1"/><path d="M11.2 11.2 L15.2 15.2" stroke="#101010" stroke-width="2.6" stroke-linecap="round"/></svg>
<svg style="left:557px;top:209.5px" width="17" height="17" viewBox="0 0 17 17"><circle cx="7" cy="7" r="6.2" fill="#f6f6f6" stroke="#303030" stroke-width="1.2"/><rect x="3.6" y="3.6" width="6.8" height="6.8" fill="none" stroke="#606060" stroke-width="1" stroke-dasharray="1.2 0.8"/><path d="M11.2 11.2 L15.2 15.2" stroke="#101010" stroke-width="2.6" stroke-linecap="round"/></svg>
<div class="a" style="left:581.5px;top:217.5px;width:0px;height:0px;border-left:2.5px solid transparent;border-right:2.5px solid transparent;border-top:2.5px solid #111"></div>
<div class="t" style="left:516.8px;top:241.19px;font-size:8.4px;color:#646b78;">Scale Options</div>
<div class="a" style="left:597px;top:200px;width:1px;height:48px;background:linear-gradient(rgba(185,197,215,0.2),#b7c3d5 12%,#b7c3d5 88%,rgba(255,255,255,.9))"></div>
<div class="a" style="left:604px;top:201.8px;width:7px;height:7px;border:1px solid #c4c8ce;background:linear-gradient(#e8eaee,#fafbfc)"></div>
<svg style="left:604.5px;top:201.5px" width="7" height="7" viewBox="0 0 7 7"><path d="M1.2 3.4 L2.9 5.6 L6.2 0.8" fill="none" stroke="#2a3a8a" stroke-width="1.2"/></svg>
<div class="t" style="left:614px;top:202.07px;font-size:7.6px;color:#1e2a4a;">Grid</div>
<div class="a" style="left:604px;top:216.7px;width:7px;height:7px;border:1px solid #c4c8ce;background:linear-gradient(#e8eaee,#fafbfc)"></div>
<svg style="left:604.5px;top:216.4px" width="7" height="7" viewBox="0 0 7 7"><path d="M1.2 3.4 L2.9 5.6 L6.2 0.8" fill="none" stroke="#2a3a8a" stroke-width="1.2"/></svg>
<div class="t" style="left:614px;top:216.92px;font-size:7.65px;color:#1e2a4a;">Visible Spectrum</div>
<div class="a" style="left:604px;top:231.7px;width:7px;height:7px;border:1px solid #c4c8ce;background:linear-gradient(#e8eaee,#fafbfc)"></div>
<div class="t" style="left:614px;top:231.97px;font-size:7.6px;color:#1e2a4a;">UV Regions</div>
<div class="a" style="left:679.5px;top:201.8px;width:7px;height:7px;border:1px solid #c4c8ce;background:linear-gradient(#e8eaee,#fafbfc)"></div>
<div class="t" style="left:689.4px;top:201.94px;font-size:7.75px;color:#1e2a4a;">Logarithmic</div>
<div class="a" style="left:679.5px;top:216.7px;width:7px;height:7px;border:1px solid #c4c8ce;background:linear-gradient(#e8eaee,#fafbfc)"></div>
<div class="t" style="left:689.4px;top:216.71px;font-size:7.9px;color:#1e2a4a;">Photon Density</div>
<div class="a" style="left:679.5px;top:231.7px;width:7px;height:7px;border:1px solid #c4c8ce;background:linear-gradient(#e8eaee,#fafbfc)"></div>
<div class="t" style="left:689.4px;top:231.84px;font-size:7.75px;color:#1e2a4a;">Hide Chart</div>
<div class="a" style="left:758px;top:201.8px;width:7px;height:7px;border:1px solid #c4c8ce;background:linear-gradient(#e8eaee,#fafbfc)"></div>
<div class="t" style="left:768.6px;top:201.81px;font-size:7.9px;color:#1e2a4a;">Auto Scale Y-Axis</div>
<div class="a" style="left:758px;top:216.7px;width:7px;height:7px;border:1px solid #c4c8ce;background:linear-gradient(#e8eaee,#fafbfc)"></div>
<div class="t" style="left:768.6px;top:216.84px;font-size:7.75px;color:#1e2a4a;">Wave Numbers</div>
<div class="a" style="left:758px;top:231.7px;width:7px;height:7px;border:1px solid #c4c8ce;background:linear-gradient(#e8eaee,#fafbfc)"></div>
<div class="t" style="left:768.6px;top:231.84px;font-size:7.75px;color:#1e2a4a;">Invert X-Axis</div>
<div class="t" style="left:704.4px;top:241.27px;font-size:8.3px;color:#646b78;">Display</div>
<div class="a" style="left:837px;top:200px;width:1px;height:48px;background:linear-gradient(rgba(185,197,215,0.2),#b7c3d5 12%,#b7c3d5 88%,rgba(255,255,255,.9))"></div>
<svg style="left:850.8px;top:201.0px" width="9" height="9" viewBox="0 0 9 9"><defs><radialGradient id="rsel" cx="40%" cy="35%" r="70%"><stop offset="0" stop-color="#7ad0ff"/><stop offset="1" stop-color="#0a5aa8"/></radialGradient></defs><circle cx="4.5" cy="4.5" r="4" fill="#f2f3f5" stroke="#a8acb4" stroke-width="0.9"/><circle cx="4.5" cy="4.5" r="2.4" fill="url(#rsel)"/></svg>
<div class="t" style="left:863.75px;top:202.98px;font-size:7.7px;color:#1e2a4a;">None</div>
<svg style="left:898.1px;top:201.0px" width="9" height="9" viewBox="0 0 9 9"><defs><radialGradient id="rsel" cx="40%" cy="35%" r="70%"><stop offset="0" stop-color="#7ad0ff"/><stop offset="1" stop-color="#0a5aa8"/></radialGradient></defs><circle cx="4.5" cy="4.5" r="4" fill="#f2f3f5" stroke="#a8acb4" stroke-width="0.9"/></svg>
<div class="t" style="left:911.7px;top:202.98px;font-size:7.7px;color:#1e2a4a;">First Derivative</div>
<svg style="left:850.8px;top:220.4px" width="9" height="9" viewBox="0 0 9 9"><defs><radialGradient id="rsel" cx="40%" cy="35%" r="70%"><stop offset="0" stop-color="#7ad0ff"/><stop offset="1" stop-color="#0a5aa8"/></radialGradient></defs><circle cx="4.5" cy="4.5" r="4" fill="#f2f3f5" stroke="#a8acb4" stroke-width="0.9"/></svg>
<div class="t" style="left:863.75px;top:222.47px;font-size:7.6px;color:#1e2a4a;">Splining</div>
<svg style="left:898.1px;top:220.4px" width="9" height="9" viewBox="0 0 9 9"><defs><radialGradient id="rsel" cx="40%" cy="35%" r="70%"><stop offset="0" stop-color="#7ad0ff"/><stop offset="1" stop-color="#0a5aa8"/></radialGradient></defs><circle cx="4.5" cy="4.5" r="4" fill="#f2f3f5" stroke="#a8acb4" stroke-width="0.9"/></svg>
<div class="t" style="left:911.7px;top:222.38px;font-size:7.7px;color:#1e2a4a;">Second Derivative</div>
<div class="t" style="left:886.7px;top:241.32px;font-size:8.25px;color:#646b78;">Post Processing</div>
<div class="a" style="left:241px;top:254.3px;width:730px;height:420px;background:#fff"></div>
<div class="a" style="left:484.4px;top:259.6px;width:376.20000000000005px;height:412.6px;background:linear-gradient(90deg,#a882b4 0.00%,#ac84b6 4.94%,#c484dc 5.16%,#8c98f4 17.44%,#7ca4f8 17.65%,#80f0c4 29.93%,#84f8b8 30.14%,#c8f884 42.42%,#d4f884 42.69%,#f8dc84 54.92%,#fcd890 55.18%,#f88480 67.41%,#f88080 67.62%,#f48080 79.90%,#ec8480 80.12%,#d08080 92.13%,#c08080 92.40%,#ae7c80 100.00%)"></div>
<div class="a" style="left:291px;top:658.94px;width:680px;height:1px;background:repeating-linear-gradient(90deg,rgba(70,70,70,.3) 0 2px,transparent 2px 4.5px)"></div>
<div class="a" style="left:291px;top:635.42px;width:680px;height:1px;background:repeating-linear-gradient(90deg,rgba(70,70,70,.3) 0 2px,transparent 2px 4.5px)"></div>
<div class="a" style="left:291px;top:611.90px;width:680px;height:1px;background:repeating-linear-gradient(90deg,rgba(70,70,70,.3) 0 2px,transparent 2px 4.5px)"></div>
<div class="a" style="left:291px;top:588.38px;width:680px;height:1px;background:repeating-linear-gradient(90deg,rgba(70,70,70,.3) 0 2px,transparent 2px 4.5px)"></div>
<div class="a" style="left:291px;top:564.86px;width:680px;height:1px;background:repeating-linear-gradient(90deg,rgba(70,70,70,.3) 0 2px,transparent 2px 4.5px)"></div>
<div class="a" style="left:291px;top:541.34px;width:680px;height:1px;background:repeating-linear-gradient(90deg,rgba(70,70,70,.3) 0 2px,transparent 2px 4.5px)"></div>
<div class="a" style="left:291px;top:517.82px;width:680px;height:1px;background:repeating-linear-gradient(90deg,rgba(70,70,70,.3) 0 2px,transparent 2px 4.5px)"></div>
<div class="a" style="left:291px;top:494.30px;width:680px;height:1px;background:repeating-linear-gradient(90deg,rgba(70,70,70,.3) 0 2px,transparent 2px 4.5px)"></div>
<div class="a" style="left:291px;top:470.78px;width:680px;height:1px;background:repeating-linear-gradient(90deg,rgba(70,70,70,.3) 0 2px,transparent 2px 4.5px)"></div>
<div class="a" style="left:291px;top:447.26px;width:680px;height:1px;background:repeating-linear-gradient(90deg,rgba(70,70,70,.3) 0 2px,transparent 2px 4.5px)"></div>
<div class="a" style="left:291px;top:423.74px;width:680px;height:1px;background:repeating-linear-gradient(90deg,rgba(70,70,70,.3) 0 2px,transparent 2px 4.5px)"></div>
<div class="a" style="left:291px;top:400.22px;width:680px;height:1px;background:repeating-linear-gradient(90deg,rgba(70,70,70,.3) 0 2px,transparent 2px 4.5px)"></div>
<div class="a" style="left:291px;top:376.70px;width:680px;height:1px;background:repeating-linear-gradient(90deg,rgba(70,70,70,.3) 0 2px,transparent 2px 4.5px)"></div>
<div class="a" style="left:291px;top:353.18px;width:680px;height:1px;background:repeating-linear-gradient(90deg,rgba(70,70,70,.3) 0 2px,transparent 2px 4.5px)"></div>
<div class="a" style="left:291px;top:329.66px;width:680px;height:1px;background:repeating-linear-gradient(90deg,rgba(70,70,70,.3) 0 2px,transparent 2px 4.5px)"></div>
<div class="a" style="left:291px;top:306.14px;width:680px;height:1px;background:repeating-linear-gradient(90deg,rgba(70,70,70,.3) 0 2px,transparent 2px 4.5px)"></div>
<div class="a" style="left:291px;top:282.62px;width:680px;height:1px;background:repeating-linear-gradient(90deg,rgba(70,70,70,.3) 0 2px,transparent 2px 4.5px)"></div>
<div class="a" style="left:316px;top:259.6px;width:1px;height:411.6px;background:repeating-linear-gradient(180deg,rgba(70,70,70,.32) 0 2px,transparent 2px 4.6px)"></div>
<div class="a" style="left:363px;top:259.6px;width:1px;height:411.6px;background:repeating-linear-gradient(180deg,rgba(70,70,70,.32) 0 2px,transparent 2px 4.6px)"></div>
<div class="a" style="left:410px;top:259.6px;width:1px;height:411.6px;background:repeating-linear-gradient(180deg,rgba(70,70,70,.32) 0 2px,transparent 2px 4.6px)"></div>
<div class="a" style="left:457px;top:259.6px;width:1px;height:411.6px;background:repeating-linear-gradient(180deg,rgba(70,70,70,.32) 0 2px,transparent 2px 4.6px)"></div>
<div class="a" style="left:503px;top:259.6px;width:1px;height:411.6px;background:#7a68e4"></div>
<div class="a" style="left:550px;top:259.6px;width:1px;height:411.6px;background:#4a74f2"></div>
<div class="a" style="left:597px;top:259.6px;width:1px;height:411.6px;background:#a8c088"></div>
<div class="a" style="left:644px;top:259.6px;width:1px;height:411.6px;background:#e2b24c"></div>
<div class="a" style="left:691px;top:259.6px;width:1px;height:411.6px;background:#ee5a38"></div>
<div class="a" style="left:738px;top:259.6px;width:1px;height:411.6px;background:#e44050"></div>
<div class="a" style="left:785px;top:259.6px;width:1px;height:411.6px;background:#c04048"></div>
<div class="a" style="left:831px;top:259.6px;width:1px;height:411.6px;background:#9c5454"></div>
<div class="a" style="left:878px;top:259.6px;width:1px;height:411.6px;background:repeating-linear-gradient(180deg,rgba(70,70,70,.32) 0 2px,transparent 2px 4.6px)"></div>
<div class="a" style="left:925px;top:259.6px;width:1px;height:411.6px;background:repeating-linear-gradient(180deg,rgba(70,70,70,.32) 0 2px,transparent 2px 4.6px)"></div>
<div class="a" style="left:291px;top:259.10px;width:700px;height:1px;background:rgba(20,20,20,.85)"></div>
<div class="a" style="left:484.4px;top:259.10px;width:376.20000000000005px;height:1px;background:linear-gradient(90deg,#a882b4 0.00%,#ac84b6 4.94%,#c484dc 5.16%,#8c98f4 17.44%,#7ca4f8 17.65%,#80f0c4 29.93%,#84f8b8 30.14%,#c8f884 42.42%,#d4f884 42.69%,#f8dc84 54.92%,#fcd890 55.18%,#f88480 67.41%,#f88080 67.62%,#f48080 79.90%,#ec8480 80.12%,#d08080 92.13%,#c08080 92.40%,#ae7c80 100.00%);filter:brightness(0.5)"></div>
<div class="a" style="left:290.6px;top:259.1px;width:1.8px;height:413.8px;background:#101010"></div>
<div class="a" style="left:291px;top:669.70px;width:700px;height:2px;background:#0a0ae0"></div>
<div class="a" style="left:484.4px;top:669.70px;width:376.20000000000005px;height:2px;background:#0808a0;opacity:.35"></div>
<div class="a" style="left:291px;top:671.70px;width:700px;height:1.2px;background:#101010"></div>
<div class="a" style="left:291px;top:672.90px;width:700px;height:2px;background:#f4f4f4"></div>
<div class="a" style="left:297.02px;top:672.90px;width:900px;height:1.3px;background:repeating-linear-gradient(90deg,rgba(40,40,40,.7) 0 1.2px,transparent 1.2px 9.372px)"></div>
<div class="a" style="left:288.2px;top:670.70px;width:2.8px;height:1px;background:#a8a8a8"></div>
<div class="t" style="left:186.50px;width:100px;text-align:right;top:667.21px;font-size:7.9px;color:#1c1c1c;">0</div>
<div class="a" style="left:288.2px;top:658.94px;width:2.8px;height:1px;background:#a8a8a8"></div>
<div class="t" style="left:186.50px;width:100px;text-align:right;top:655.45px;font-size:7.9px;color:#1c1c1c;">2000</div>
<div class="a" style="left:288.2px;top:647.18px;width:2.8px;height:1px;background:#a8a8a8"></div>
<div class="t" style="left:186.50px;width:100px;text-align:right;top:643.69px;font-size:7.9px;color:#1c1c1c;">4000</div>
<div class="a" style="left:288.2px;top:635.42px;width:2.8px;height:1px;background:#a8a8a8"></div>
<div class="t" style="left:186.50px;width:100px;text-align:right;top:631.93px;font-size:7.9px;color:#1c1c1c;">6000</div>
<div class="a" style="left:288.2px;top:623.66px;width:2.8px;height:1px;background:#a8a8a8"></div>
<div class="t" style="left:186.50px;width:100px;text-align:right;top:620.17px;font-size:7.9px;color:#1c1c1c;">8000</div>
<div class="a" style="left:288.2px;top:611.90px;width:2.8px;height:1px;background:#a8a8a8"></div>
<div class="t" style="left:186.50px;width:100px;text-align:right;top:608.41px;font-size:7.9px;color:#1c1c1c;">10000</div>
<div class="a" style="left:288.2px;top:600.14px;width:2.8px;height:1px;background:#a8a8a8"></div>
<div class="t" style="left:186.50px;width:100px;text-align:right;top:596.65px;font-size:7.9px;color:#1c1c1c;">12000</div>
<div class="a" style="left:288.2px;top:588.38px;width:2.8px;height:1px;background:#a8a8a8"></div>
<div class="t" style="left:186.50px;width:100px;text-align:right;top:584.89px;font-size:7.9px;color:#1c1c1c;">14000</div>
<div class="a" style="left:288.2px;top:576.62px;width:2.8px;height:1px;background:#a8a8a8"></div>
<div class="t" style="left:186.50px;width:100px;text-align:right;top:573.13px;font-size:7.9px;color:#1c1c1c;">16000</div>
<div class="a" style="left:288.2px;top:564.86px;width:2.8px;height:1px;background:#a8a8a8"></div>
<div class="t" style="left:186.50px;width:100px;text-align:right;top:561.37px;font-size:7.9px;color:#1c1c1c;">18000</div>
<div class="a" style="left:288.2px;top:553.10px;width:2.8px;height:1px;background:#a8a8a8"></div>
<div class="t" style="left:186.50px;width:100px;text-align:right;top:549.61px;font-size:7.9px;color:#1c1c1c;">20000</div>
<div class="a" style="left:288.2px;top:541.34px;width:2.8px;height:1px;background:#a8a8a8"></div>
<div class="t" style="left:186.50px;width:100px;text-align:right;top:537.85px;font-size:7.9px;color:#1c1c1c;">22000</div>
<div class="a" style="left:288.2px;top:529.58px;width:2.8px;height:1px;background:#a8a8a8"></div>
<div class="t" style="left:186.50px;width:100px;text-align:right;top:526.09px;font-size:7.9px;color:#1c1c1c;">24000</div>
<div class="a" style="left:288.2px;top:517.82px;width:2.8px;height:1px;background:#a8a8a8"></div>
<div class="t" style="left:186.50px;width:100px;text-align:right;top:514.33px;font-size:7.9px;color:#1c1c1c;">26000</div>
<div class="a" style="left:288.2px;top:506.06px;width:2.8px;height:1px;background:#a8a8a8"></div>
<div class="t" style="left:186.50px;width:100px;text-align:right;top:502.57px;font-size:7.9px;color:#1c1c1c;">28000</div>
<div class="a" style="left:288.2px;top:494.30px;width:2.8px;height:1px;background:#a8a8a8"></div>
<div class="t" style="left:186.50px;width:100px;text-align:right;top:490.81px;font-size:7.9px;color:#1c1c1c;">30000</div>
<div class="a" style="left:288.2px;top:482.54px;width:2.8px;height:1px;background:#a8a8a8"></div>
<div class="t" style="left:186.50px;width:100px;text-align:right;top:479.05px;font-size:7.9px;color:#1c1c1c;">32000</div>
<div class="a" style="left:288.2px;top:470.78px;width:2.8px;height:1px;background:#a8a8a8"></div>
<div class="t" style="left:186.50px;width:100px;text-align:right;top:467.29px;font-size:7.9px;color:#1c1c1c;">34000</div>
<div class="a" style="left:288.2px;top:459.02px;width:2.8px;height:1px;background:#a8a8a8"></div>
<div class="t" style="left:186.50px;width:100px;text-align:right;top:455.53px;font-size:7.9px;color:#1c1c1c;">36000</div>
<div class="a" style="left:288.2px;top:447.26px;width:2.8px;height:1px;background:#a8a8a8"></div>
<div class="t" style="left:186.50px;width:100px;text-align:right;top:443.77px;font-size:7.9px;color:#1c1c1c;">38000</div>
<div class="a" style="left:288.2px;top:435.50px;width:2.8px;height:1px;background:#a8a8a8"></div>
<div class="t" style="left:186.50px;width:100px;text-align:right;top:432.01px;font-size:7.9px;color:#1c1c1c;">40000</div>
<div class="a" style="left:288.2px;top:423.74px;width:2.8px;height:1px;background:#a8a8a8"></div>
<div class="t" style="left:186.50px;width:100px;text-align:right;top:420.25px;font-size:7.9px;color:#1c1c1c;">42000</div>
<div class="a" style="left:288.2px;top:411.98px;width:2.8px;height:1px;background:#a8a8a8"></div>
<div class="t" style="left:186.50px;width:100px;text-align:right;top:408.49px;font-size:7.9px;color:#1c1c1c;">44000</div>
<div class="a" style="left:288.2px;top:400.22px;width:2.8px;height:1px;background:#a8a8a8"></div>
<div class="t" style="left:186.50px;width:100px;text-align:right;top:396.73px;font-size:7.9px;color:#1c1c1c;">46000</div>
<div class="a" style="left:288.2px;top:388.46px;width:2.8px;height:1px;background:#a8a8a8"></div>
<div class="t" style="left:186.50px;width:100px;text-align:right;top:384.97px;font-size:7.9px;color:#1c1c1c;">48000</div>
<div class="a" style="left:288.2px;top:376.70px;width:2.8px;height:1px;background:#a8a8a8"></div>
<div class="t" style="left:186.50px;width:100px;text-align:right;top:373.21px;font-size:7.9px;color:#1c1c1c;">50000</div>
<div class="a" style="left:288.2px;top:364.94px;width:2.8px;height:1px;background:#a8a8a8"></div>
<div class="t" style="left:186.50px;width:100px;text-align:right;top:361.45px;font-size:7.9px;color:#1c1c1c;">52000</div>
<div class="a" style="left:288.2px;top:353.18px;width:2.8px;height:1px;background:#a8a8a8"></div>
<div class="t" style="left:186.50px;width:100px;text-align:right;top:349.69px;font-size:7.9px;color:#1c1c1c;">54000</div>
<div class="a" style="left:288.2px;top:341.42px;width:2.8px;height:1px;background:#a8a8a8"></div>
<div class="t" style="left:186.50px;width:100px;text-align:right;top:337.93px;font-size:7.9px;color:#1c1c1c;">56000</div>
<div class="a" style="left:288.2px;top:329.66px;width:2.8px;height:1px;background:#a8a8a8"></div>
<div class="t" style="left:186.50px;width:100px;text-align:right;top:326.17px;font-size:7.9px;color:#1c1c1c;">58000</div>
<div class="a" style="left:288.2px;top:317.90px;width:2.8px;height:1px;background:#a8a8a8"></div>
<div class="t" style="left:186.50px;width:100px;text-align:right;top:314.41px;font-size:7.9px;color:#1c1c1c;">60000</div>
<div class="a" style="left:288.2px;top:306.14px;width:2.8px;height:1px;background:#a8a8a8"></div>
<div class="t" style="left:186.50px;width:100px;text-align:right;top:302.65px;font-size:7.9px;color:#1c1c1c;">62000</div>
<div class="a" style="left:288.2px;top:294.38px;width:2.8px;height:1px;background:#a8a8a8"></div>
<div class="t" style="left:186.50px;width:100px;text-align:right;top:290.89px;font-size:7.9px;color:#1c1c1c;">64000</div>
<div class="a" style="left:288.2px;top:282.62px;width:2.8px;height:1px;background:#a8a8a8"></div>
<div class="t" style="left:186.50px;width:100px;text-align:right;top:279.13px;font-size:7.9px;color:#1c1c1c;">66000</div>
<div class="a" style="left:288.2px;top:270.86px;width:2.8px;height:1px;background:#a8a8a8"></div>
<div class="t" style="left:186.50px;width:100px;text-align:right;top:267.37px;font-size:7.9px;color:#1c1c1c;">68000</div>
<div class="a" style="left:288.2px;top:259.10px;width:2.8px;height:1px;background:#a8a8a8"></div>
<div class="t" style="left:186.50px;width:100px;text-align:right;top:255.61px;font-size:7.9px;color:#1c1c1c;">70000</div>
<div class="t" style="left:256.8px;top:464.5px;font-size:8.3px;color:#202020;transform:translate(-50%,-50%) rotate(-90deg)">Scope Corrected for Dark [ADC Counts]</div>
<div class="a" style="left:237.3px;top:424.0px;width:1.3px;height:1.5px;background:#333"></div>
<div class="a" style="left:237.3px;top:427.0px;width:1.3px;height:1.5px;background:#333"></div>
<div class="a" style="left:237.3px;top:430.0px;width:1.3px;height:1.5px;background:#333"></div>
<div class="a" style="left:237.3px;top:433.0px;width:1.3px;height:1.5px;background:#333"></div>
<div class="a" style="left:237.3px;top:436.0px;width:1.3px;height:1.5px;background:#333"></div>
<div class="a" style="left:237.3px;top:439.0px;width:1.3px;height:1.5px;background:#333"></div>
<div class="a" style="left:237.3px;top:442.0px;width:1.3px;height:1.5px;background:#333"></div>
<div class="a" style="left:237.3px;top:445.0px;width:1.3px;height:1.5px;background:#333"></div>
<div class="a" style="left:237.3px;top:448.0px;width:1.3px;height:1.5px;background:#333"></div>
</div>
</body></html>
